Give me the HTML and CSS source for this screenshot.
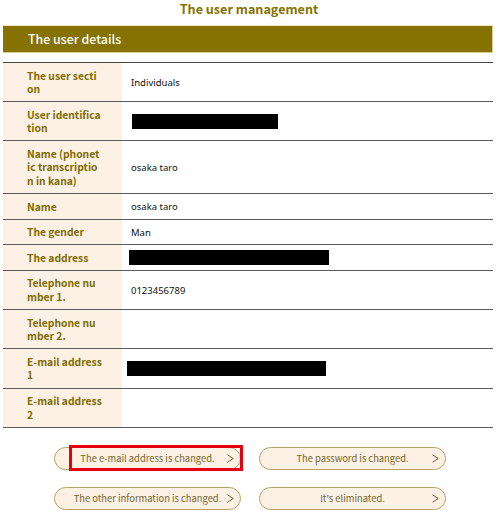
FILE: index.html
```html
<!DOCTYPE html>
<html>
<head>
    <title>The user management</title>
    <link rel="stylesheet" href="styles.css">
</head>
<body>
    <h1>The user management</h1>

    <div class="page">
        <h2 class="bar">The user details</h2>

        <table class="details">
            <tr>
                <th>The user section</th>
                <td>Individuals</td>
            </tr>
            <tr>
                <th>User identification</th>
                <td><span class="redact id"></span></td>
            </tr>
            <tr>
                <th>Name (phonetic transcription in kana)</th>
                <td>osaka taro</td>
            </tr>
            <tr>
                <th>Name</th>
                <td>osaka taro</td>
            </tr>
            <tr>
                <th>The gender</th>
                <td>Man</td>
            </tr>
            <tr>
                <th>The address</th>
                <td><span class="redact address"></span></td>
            </tr>
            <tr>
                <th>Telephone number 1.</th>
                <td>0123456789</td>
            </tr>
            <tr>
                <th>Telephone number 2.</th>
                <td></td>
            </tr>
            <tr>
                <th>E-mail address 1</th>
                <td><span class="redact mail"></span></td>
            </tr>
            <tr>
                <th>E-mail address 2</th>
                <td></td>
            </tr>
        </table>

        <div class="actions">
            <button class="pill marked">The e-mail address is changed.<svg class="arrow" width="7" height="9" viewBox="0 0 7 9"><polyline points="0.5,0.8 6.3,4.5 0.5,8.2"/></svg></button>
            <button class="pill">The password is changed.<svg class="arrow" width="7" height="9" viewBox="0 0 7 9"><polyline points="0.5,0.8 6.3,4.5 0.5,8.2"/></svg></button>
            <button class="pill">The other information is changed.<svg class="arrow" width="7" height="9" viewBox="0 0 7 9"><polyline points="0.5,0.8 6.3,4.5 0.5,8.2"/></svg></button>
            <button class="pill">It's eliminated.<svg class="arrow" width="7" height="9" viewBox="0 0 7 9"><polyline points="0.5,0.8 6.3,4.5 0.5,8.2"/></svg></button>
        </div>
    </div>
</body>
</html>
```

FILE: styles.css
```css
body {
    margin: 0;
    font-family: "Noto Sans CJK JP", "Noto Sans", sans-serif;
    color: #222;
    background: white;
}
h1 {
    margin: 0;
    height: 25px;
    line-height: 18px;
    text-align: center;
    font-size: 12.6px;
    font-weight: 700;
    color: #857200;
}
.page {
    width: 490px;
    margin: 0 3px;
}
.bar {
    margin: 0 0 9px 0;
    height: 26px;
    line-height: 26px;
    padding-left: 25px;
    background: #857200;
    border: 1px solid #d9cf96;
    border-left: none;
    border-top-color: #efe9c6;
    color: white;
    font-size: 12.4px;
    font-weight: 500;
}
.details {
    width: 100%;
    border-collapse: collapse;
    border-top: 1px solid #444;
}
.details tr {
    border-bottom: 1px solid #5a5a5a;
}
.details th {
    width: 75px;
    padding: 5.5px 20px 5.5px 24px;
    background: #fdf1e6;
    color: #7f6b00;
    font-size: 10.3px;
    font-weight: 700;
    line-height: 13.6px;
    text-align: left;
    word-break: break-all;
}
.details td {
    padding: 0 9px;
    font-family: "Noto Sans", sans-serif;
    font-size: 9.5px;
    color: #111;
    vertical-align: middle;
}
.redact {
    display: block;
    height: 15px;
    background: black;
}
.redact.id {
    width: 146px;
    margin-left: 1px;
}
.redact.address {
    width: 200px;
    margin-left: -2px;
}
.redact.mail {
    width: 199px;
    margin-left: -4px;
}
.actions {
    display: grid;
    grid-template-columns: 187px 187px;
    column-gap: 18px;
    row-gap: 17px;
    justify-content: center;
    margin-top: 19px;
    padding-left: 4px;
}
.pill {
    position: relative;
    height: 23px;
    padding: 0;
    background: #fdf1e6;
    border: 1px solid #b8a462;
    border-radius: 12px;
    font-family: "Noto Sans CJK JP", "Noto Sans", sans-serif;
    font-size: 9.4px;
    color: #75662a;
    text-align: center;
    white-space: nowrap;
    cursor: pointer;
}
.arrow {
    position: absolute;
    right: 6px;
    top: 6px;
    fill: none;
    stroke: #6b5d2a;
    stroke-width: 1;
}
.marked::after {
    content: "";
    position: absolute;
    left: 14px;
    right: -3px;
    top: -3px;
    bottom: -2px;
    border: 3px solid #e60012;
}
```
